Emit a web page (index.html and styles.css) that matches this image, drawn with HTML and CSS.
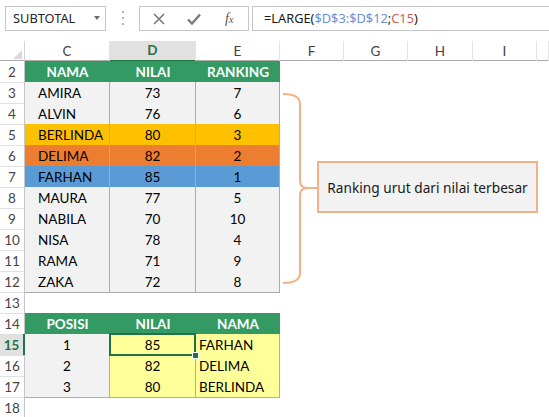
FILE: index.html
```html
<!DOCTYPE html>
<html lang="id">
<head>
    <meta charset="UTF-8">
    <title>Ranking Nilai</title>
    <link rel="stylesheet" href="styles.css">
</head>
<body>
    <!-- Bar rumus -->
    <div class="formula-bar">
        <div class="name-box">SUBTOTAL<span class="caret"></span></div>
        <svg class="grip" width="4" height="14" viewBox="0 0 4 14">
            <rect x="1" y="0" width="2" height="2" fill="#b4b4b4"/>
            <rect x="1" y="6" width="2" height="2" fill="#b4b4b4"/>
            <rect x="1" y="12" width="2" height="2" fill="#b4b4b4"/>
        </svg>
        <div class="fx-buttons">
            <svg width="12" height="12" viewBox="0 0 12 12">
                <path d="M1 1 L11 11 M11 1 L1 11" stroke="#7a7a7a" stroke-width="1.6" fill="none"/>
            </svg>
            <svg width="14" height="12" viewBox="0 0 14 12">
                <path d="M1 6.5 L5 10.5 L13 1.5" stroke="#7a7a7a" stroke-width="2.4" fill="none"/>
            </svg>
            <span class="fx">f<sub>x</sub></span>
        </div>
        <div class="formula">=LARGE(<span class="ref-blue">$D$3:$D$12</span>;<span class="ref-red">C15</span>)</div>
    </div>

    <div class="sheet">
        <div class="col-heads">
            <div class="corner"></div>
            <div class="ch">C</div>
            <div class="ch selected">D</div>
            <div class="ch">E</div>
            <div class="ch">F</div>
            <div class="ch">G</div>
            <div class="ch">H</div>
            <div class="ch">I</div>
            <div class="ch"></div>
        </div>

        <!-- Tabel ranking -->
        <div class="row"><div class="rh">2</div><div class="th">NAMA</div><div class="th">NILAI</div><div class="th">RANKING</div></div>
        <div class="row"><div class="rh">3</div><div class="td name">AMIRA</div><div class="td">73</div><div class="td">7</div></div>
        <div class="row"><div class="rh">4</div><div class="td name">ALVIN</div><div class="td">76</div><div class="td">6</div></div>
        <div class="row gold"><div class="rh">5</div><div class="td name">BERLINDA</div><div class="td">80</div><div class="td">3</div></div>
        <div class="row orange"><div class="rh">6</div><div class="td name">DELIMA</div><div class="td">82</div><div class="td">2</div></div>
        <div class="row blue"><div class="rh">7</div><div class="td name">FARHAN</div><div class="td">85</div><div class="td">1</div></div>
        <div class="row"><div class="rh">8</div><div class="td name">MAURA</div><div class="td">77</div><div class="td">5</div></div>
        <div class="row"><div class="rh">9</div><div class="td name">NABILA</div><div class="td">70</div><div class="td">10</div></div>
        <div class="row"><div class="rh">10</div><div class="td name">NISA</div><div class="td">78</div><div class="td">4</div></div>
        <div class="row"><div class="rh">11</div><div class="td name">RAMA</div><div class="td">71</div><div class="td">9</div></div>
        <div class="row"><div class="rh">12</div><div class="td name">ZAKA</div><div class="td">72</div><div class="td">8</div></div>
        <div class="row"><div class="rh">13</div></div>

        <!-- Tabel posisi -->
        <div class="row"><div class="rh">14</div><div class="th">POSISI</div><div class="th">NILAI</div><div class="th">NAMA</div></div>
        <div class="row"><div class="rh active">15</div><div class="td">1</div><div class="td yellow current">85</div><div class="td yellow result">FARHAN</div></div>
        <div class="row"><div class="rh">16</div><div class="td">2</div><div class="td yellow">82</div><div class="td yellow result">DELIMA</div></div>
        <div class="row"><div class="rh">17</div><div class="td">3</div><div class="td yellow">80</div><div class="td yellow result">BERLINDA</div></div>
        <div class="row"><div class="rh">18</div></div>

        <!-- Keterangan -->
        <svg class="brace" width="40" height="200" viewBox="0 0 40 200">
            <path d="M1 1 Q18 1 18 11 L18 88 Q18 95 26 95 L36 95 M26 95 Q18 95 18 102 L18 180 Q18 190 1 190"
                  stroke="#f4b183" stroke-width="2" fill="none"/>
        </svg>
        <div class="note">Ranking urut dari nilai terbesar</div>
    </div>
</body>
</html>
```

FILE: styles.css
```css
body {
    margin: 0;
    background: #fff;
    font-family: Lato, "Liberation Sans", sans-serif;
    color: #000;
    overflow: hidden;
}
.formula-bar {
    height: 41px;
    box-sizing: border-box;
    padding: 6px 0 0 5px;
    display: flex;
    align-items: flex-start;
    font-family: "Noto Sans", sans-serif;
    font-size: 12.8px;
}
.name-box {
    position: relative;
    width: 101px;
    height: 25px;
    box-sizing: border-box;
    border: 1px solid #c6c6c6;
    padding-left: 7px;
    line-height: 23px;
    color: #262626;
}
.caret {
    position: absolute;
    right: 5px;
    top: 9px;
    border-left: 3.5px solid transparent;
    border-right: 3.5px solid transparent;
    border-top: 4px solid #6d6d6d;
}
.grip {
    margin: 5px 0 0 15px;
}
.fx-buttons {
    margin-left: 14px;
    width: 110px;
    height: 25px;
    box-sizing: border-box;
    border: 1px solid #c6c6c6;
    display: flex;
    align-items: center;
    padding-left: 13px;
    gap: 22px;
}
.fx {
    font-family: "Liberation Serif", serif;
    font-style: italic;
    font-size: 14px;
    color: #555;
    margin-left: 2px;
}
.fx sub {
    font-size: 10px;
    vertical-align: 0;
}
.formula {
    margin-left: 3px;
    flex: 1;
    height: 25px;
    box-sizing: border-box;
    border: 1px solid #c6c6c6;
    border-right: none;
    padding-left: 11px;
    line-height: 23px;
    color: #1a1a1a;
}
.ref-blue {
    color: #6b8fd9;
}
.ref-red {
    color: #d0605a;
}

.sheet {
    position: relative;
}
.col-heads {
    display: grid;
    grid-template-columns: 25px 85px 86px 84px 64px 64px 65px 64px 1fr;
    height: 20px;
    border-bottom: 1px solid #ababab;
    box-sizing: border-box;
}
.corner {
    position: relative;
    border-right: 1px solid #d4d4d4;
}
.corner::after {
    content: "";
    position: absolute;
    right: 2px;
    bottom: 2px;
    border-left: 9px solid transparent;
    border-bottom: 9px solid #dadada;
}
.ch {
    text-align: center;
    font-size: 13.5px;
    line-height: 20px;
    color: #444;
    border-right: 1px solid #e3e3e3;
}
.ch.selected {
    background: #e1e1e1;
    color: #217346;
    font-weight: bold;
    border-bottom: 2px solid #217346;
    margin-bottom: -1px;
    line-height: 19px;
}

.row {
    display: grid;
    grid-template-columns: 25px 85px 86px 84px;
    height: 21px;
    font-size: 13.5px;
}
.row > div {
    box-sizing: border-box;
    padding-top: 2px;
    line-height: 19px;
    text-align: center;
}
.rh {
    color: #444;
    border-right: 1px solid #c6c6c6;
    border-bottom: 1px solid #e1e1e1;
}
.rh.active {
    background: #e1e1e1;
    color: #217346;
    font-weight: bold;
    border-right: 2px solid #217346;
}
.th {
    background: #329a62;
    color: #fff;
    font-weight: bold;
}
.td {
    background: #f2f2f2;
    border-right: 1px solid #acacac;
    border-bottom: 1px solid #acacac;
}
.row > .name {
    text-align: left;
    padding-left: 13px;
}
.row > .result {
    text-align: left;
    padding-left: 3px;
}
.gold .td {
    background: #ffc000;
}
.orange .td {
    background: #ed7d31;
}
.blue .td {
    background: #5b9bd5;
}
.td.yellow {
    background: #ffff99;
}
.current {
    position: relative;
}
.current::after {
    content: "";
    position: absolute;
    top: -1px;
    left: -1px;
    right: -1px;
    bottom: -1px;
    border: 2px solid #217346;
}
.current::before {
    content: "";
    position: absolute;
    right: -4px;
    bottom: -4px;
    width: 5px;
    height: 5px;
    background: #217346;
    border: 1px solid #fff;
    z-index: 1;
}

.brace {
    position: absolute;
    left: 282px;
    top: 52px;
}
.note {
    position: absolute;
    left: 317px;
    top: 120px;
    width: 221px;
    height: 52px;
    box-sizing: border-box;
    border: 2px solid #f4b183;
    background: #f2f2f2;
    font-family: "Noto Sans", sans-serif;
    font-size: 13.7px;
    color: #1a1a1a;
    display: flex;
    align-items: center;
    justify-content: center;
}
```
